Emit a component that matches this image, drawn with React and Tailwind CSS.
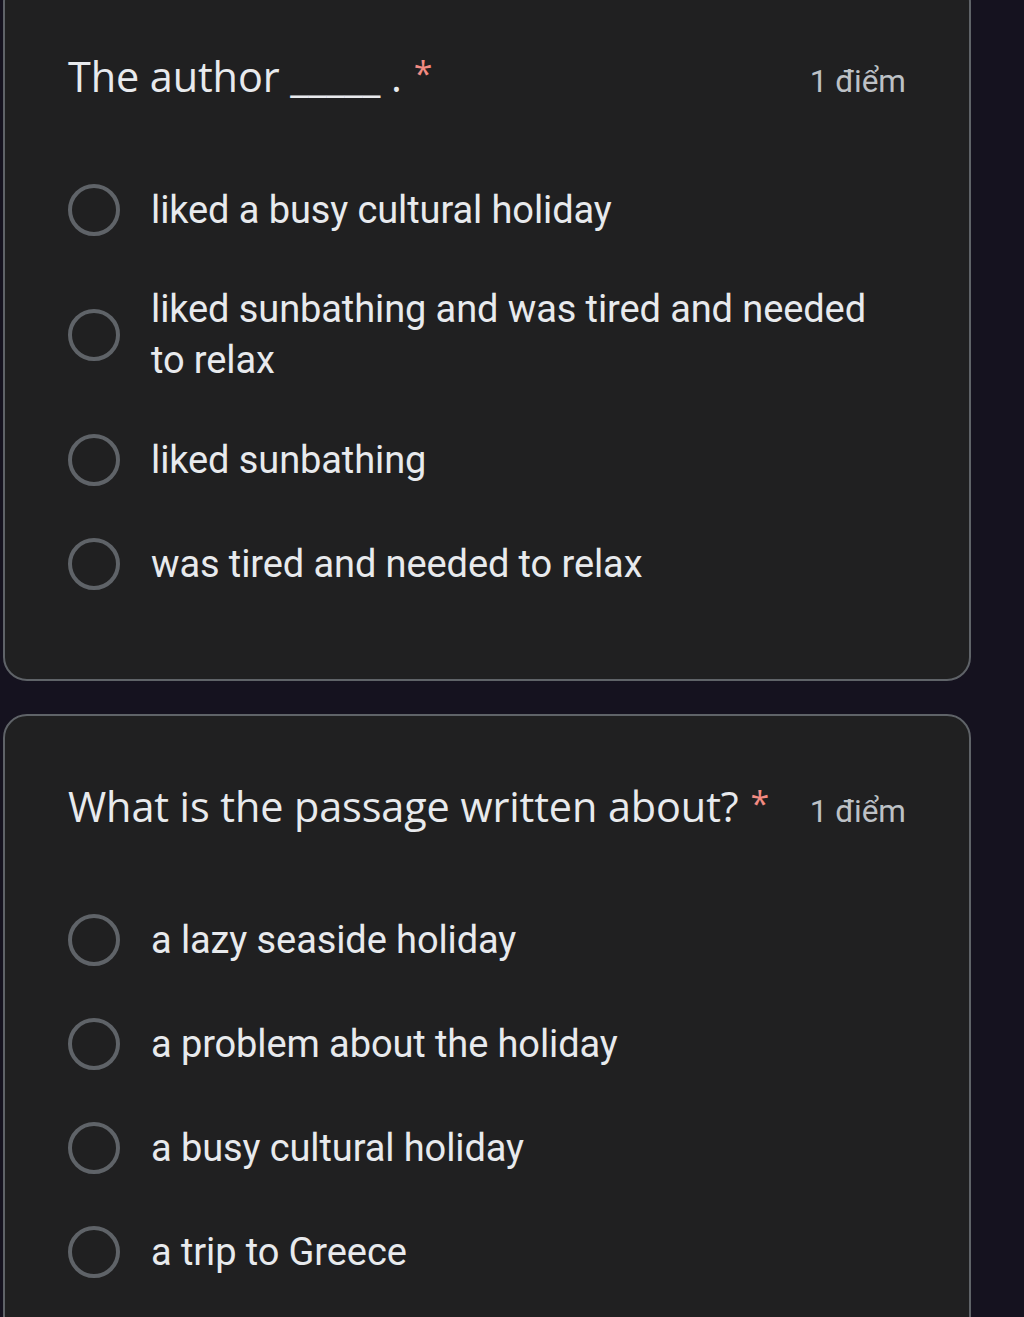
import React from 'react';

const questions = [
  {
    title: 'The author _____ .',
    points: '1 điểm',
    options: [
      'liked a busy cultural holiday',
      'liked sunbathing and was tired and needed to relax',
      'liked sunbathing',
      'was tired and needed to relax',
    ],
  },
  {
    title: 'What is the passage written about?',
    points: '1 điểm',
    options: [
      'a lazy seaside holiday',
      'a problem about the holiday',
      'a busy cultural holiday',
      'a trip to Greece',
    ],
  },
];

const Radio = () => (
  <span className="block w-[52px] h-[52px] shrink-0 rounded-full border-[4px] border-[#5f6368]" />
);

const QuestionCard = ({ q, first }) => (
  <div
    className={`rounded-[24px] border-2 border-[#5f6368] bg-[#202021] pl-[63px] pr-[63px] ${
      first ? 'pt-[68px] pb-[89px]' : 'pt-[62px] pb-[80px]'
    }`}
  >
    {/* Title row */}
    <div className="flex items-baseline justify-between">
      <h2 className="text-[41.4px] leading-[56px] text-[#e8eaed] font-['Open_Sans',sans-serif] tracking-[-0.1px]">
        {q.title}
        <span className="relative top-[-6px] ml-[12px] text-[34px] text-[#f28b82]">*</span>
      </h2>
      <span className="text-[31.5px] text-[#bdc1c6] font-['Roboto',sans-serif] whitespace-nowrap">
        {q.points}
      </span>
    </div>

    {/* Options */}
    <div className="mt-[77px] flex flex-col gap-[52px]">
      {q.options.map((opt) => (
        <label
          key={opt}
          className={`flex items-center gap-[31px] ${opt.length > 40 ? '-my-[4px]' : ''}`}
        >
          <Radio />
          <span className="text-[38px] leading-[51px] text-[#e8eaed] font-['Roboto',sans-serif] tracking-[-0.1px]">
            {opt}
          </span>
        </label>
      ))}
    </div>
  </div>
);

const App = () => {
  return (
    <div className="h-[1317px] overflow-hidden bg-[#15121f]">
      <div className="w-[971px] pl-[3px] -mt-[22px] flex flex-col gap-[33px]">
        {questions.map((q, i) => (
          <QuestionCard key={i} q={q} first={i === 0} />
        ))}
      </div>
    </div>
  );
};

export default App;
